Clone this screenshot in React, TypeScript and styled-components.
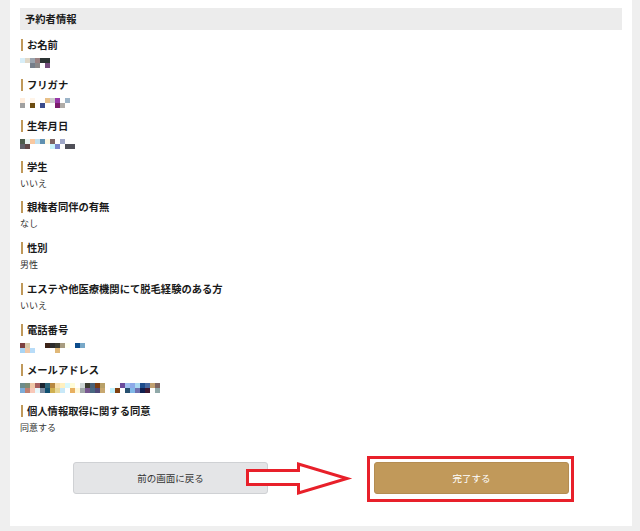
import styled, { createGlobalStyle } from 'styled-components'

const GlobalStyle = createGlobalStyle`
  html, body {
    margin: 0;
    padding: 0;
    background: #efefef;
  }
  body {
    font-family: 'Noto Sans CJK JP', 'Noto Sans', sans-serif;
    color: #222;
  }
`

type Rows = string[][]

const mosaics: Record<string, Rows> = {
  name: [
    ['#d8eef8', '#e0d8c8', '#9aa4ae', '#9a8080', '#2c3434', '#2c3434'],
    ['', '', '#767e8a', '#8c8888', '', '#744c7c'],
  ],
  kana: [
    ['#ffeede', '', '#fff4e8', '', '', '#e8c088', '#cccccc', '#9838a8', '', '#9cb4c8'],
    ['#a0a0a0', '', '#6c4c10', '', '#3c4c8c', '', '', '#7c1c6c', '#b0aca8', ''],
  ],
  birth: [
    ['#4c5c4c', '#e8f4f0', '#f8c8a0', '#c0e0f0', '#6090b0', '#fff8e0', '#7c6464', '', '#a0a8c8', '', ''],
    ['#606068', '#604848', '', '', '', '', '#c8f4fc', '#7884c8', '', '#505058', '#505058'],
  ],
  tel: [
    ['#7c4040', '#d8c8a8', '', '', '', '#3c2418', '#2c2c2c', '#3c3c30', '#a89c80', '#fffff0', '', '#0c4c8c', '#78a8c8'],
    ['#a8d4f4', '#f0c8a8', '#b8dcf8', '', '', '', '', '#e0b878', '', '', '', '', ''],
  ],
  mail: [
    ['#6c8c8c', '#7c8c74', '#f0c8a8', '#a86060', '#1c2430', '#2c6478', '#b88840', '#f8e0b0', '#fff0c0', '#d8f8fc', '#fffcd8', '', '#d0d8d8', '#3c3c30', '#486078', '#7c3c10', '#b8a068', '', '', '#f8fcfc', '#6c4c9c', '#a0c0f0', '#8ca8e8', '#a8d8f0', '#1c4c8c', '#4868a0', '#c0a070', '#7c6460'],
    ['#7cacd8', '#c08070', '#f8c8b8', '#e8f8fc', '#7c8ca0', '#105070', '#d0b050', '#e8d898', '#c8e8f8', '', '#e8b060', '#fff8d8', '#a0a8a8', '#785890', '#486880', '#504878', '#c8a870', '', '#c0f0fc', '#804010', '', '#285070', '#80b8e8', '#7070b0', '#102050', '#401830', '#fcfcfc', '#90a8a8'],
  ],
}

type Item = { label: string; value?: string; mosaic?: string }

const items: Item[] = [
  { label: 'お名前', mosaic: 'name' },
  { label: 'フリガナ', mosaic: 'kana' },
  { label: '生年月日', mosaic: 'birth' },
  { label: '学生', value: 'いいえ' },
  { label: '親権者同伴の有無', value: 'なし' },
  { label: '性別', value: '男性' },
  { label: 'エステや他医療機関にて脱毛経験のある方', value: 'いいえ' },
  { label: '電話番号', mosaic: 'tel' },
  { label: 'メールアドレス', mosaic: 'mail' },
  { label: '個人情報取得に関する同意', value: '同意する' },
]

const Mosaic = ({ rows }: { rows: Rows }) => (
  <MosaicBox>
    {rows.map((row, r) => (
      <MosaicRow key={r}>
        {row.map((c, i) => (
          <Cell key={i} $color={c} />
        ))}
      </MosaicRow>
    ))}
  </MosaicBox>
)

const Arrow = () => (
  <ArrowSvg width='112' height='40' viewBox='0 0 112 40'>
    <polygon
      points='4.5,11.5 55.5,11.5 55.5,5 104,19.5 55.5,34 55.5,25.5 4.5,25.5'
      fill='#fff'
      stroke='#e8202a'
      strokeWidth='3'
      strokeLinejoin='miter'
    />
  </ArrowSvg>
)

export default function App() {
  return (
    <Page>
      <GlobalStyle />
      <Panel>
        <SectionTitle>予約者情報</SectionTitle>
        <List>
          {items.map((it) => (
            <Entry key={it.label}>
              <Label>{it.label}</Label>
              {it.mosaic ? <Mosaic rows={mosaics[it.mosaic]} /> : <Value>{it.value}</Value>}
            </Entry>
          ))}
        </List>
        <Actions>
          <BackButton type='button'>前の画面に戻る</BackButton>
          <Highlight>
            <SubmitButton type='button'>完了する</SubmitButton>
          </Highlight>
          <Arrow />
        </Actions>
      </Panel>
    </Page>
  )
}

const Page = styled.div`
  padding: 0 8px 5px 10px;
`

const Panel = styled.div`
  background: #fff;
  height: 526px;
  box-sizing: border-box;
  padding: 8px 10px 0;
`

const SectionTitle = styled.div`
  height: 22px;
  line-height: 22px;
  background: #ececec;
  padding-left: 5px;
  font-size: 10.3px;
  font-weight: 700;
  color: #1a1a1a;
`

const List = styled.div`
  margin-top: 5.7px;
`

const Entry = styled.div`
  margin-bottom: 7.7px;
`

const Label = styled.div`
  display: flex;
  align-items: center;
  gap: 4px;
  height: 18px;
  line-height: 18px;
  font-size: 10.3px;
  font-weight: 700;
  color: #1a1a1a;
  padding-left: 1px;

  &::before {
    content: '';
    width: 2px;
    height: 12px;
    background: #c0995a;
  }
`

const Value = styled.div`
  height: 15px;
  line-height: 15px;
  font-size: 9px;
  color: #333;
`

const MosaicBox = styled.div`
  height: 15px;
  box-sizing: border-box;
  padding-top: 4px;
  display: flex;
  flex-direction: column;
`

const MosaicRow = styled.div`
  display: flex;
`

const Cell = styled.span<{ $color: string }>`
  width: 5px;
  height: 5px;
  background: ${(p) => p.$color || 'transparent'};
`

const Actions = styled.div`
  position: relative;
  margin-top: 27px;
  display: flex;
  justify-content: center;
  gap: 106px;
`

const buttonBase = `
  width: 195px;
  height: 32px;
  box-sizing: border-box;
  border-radius: 3px;
  font-family: 'Noto Sans CJK JP', 'Noto Sans', sans-serif;
  font-size: 9.5px;
  cursor: pointer;
`

const BackButton = styled.button`
  ${buttonBase}
  background: #e4e5e7;
  border: 1px solid #cfd1d4;
  color: #333;
`

const Highlight = styled.div`
  position: relative;

  &::after {
    content: '';
    position: absolute;
    top: -6px;
    bottom: -8px;
    left: -7px;
    right: -5px;
    border: 3px solid #e8202a;
    pointer-events: none;
  }
`

const SubmitButton = styled.button`
  ${buttonBase}
  display: block;
  background: #c1995a;
  border: 1px solid #b48c52;
  color: #fff;
`

const ArrowSvg = styled.svg`
  position: absolute;
  left: 223px;
  top: -3px;
`
